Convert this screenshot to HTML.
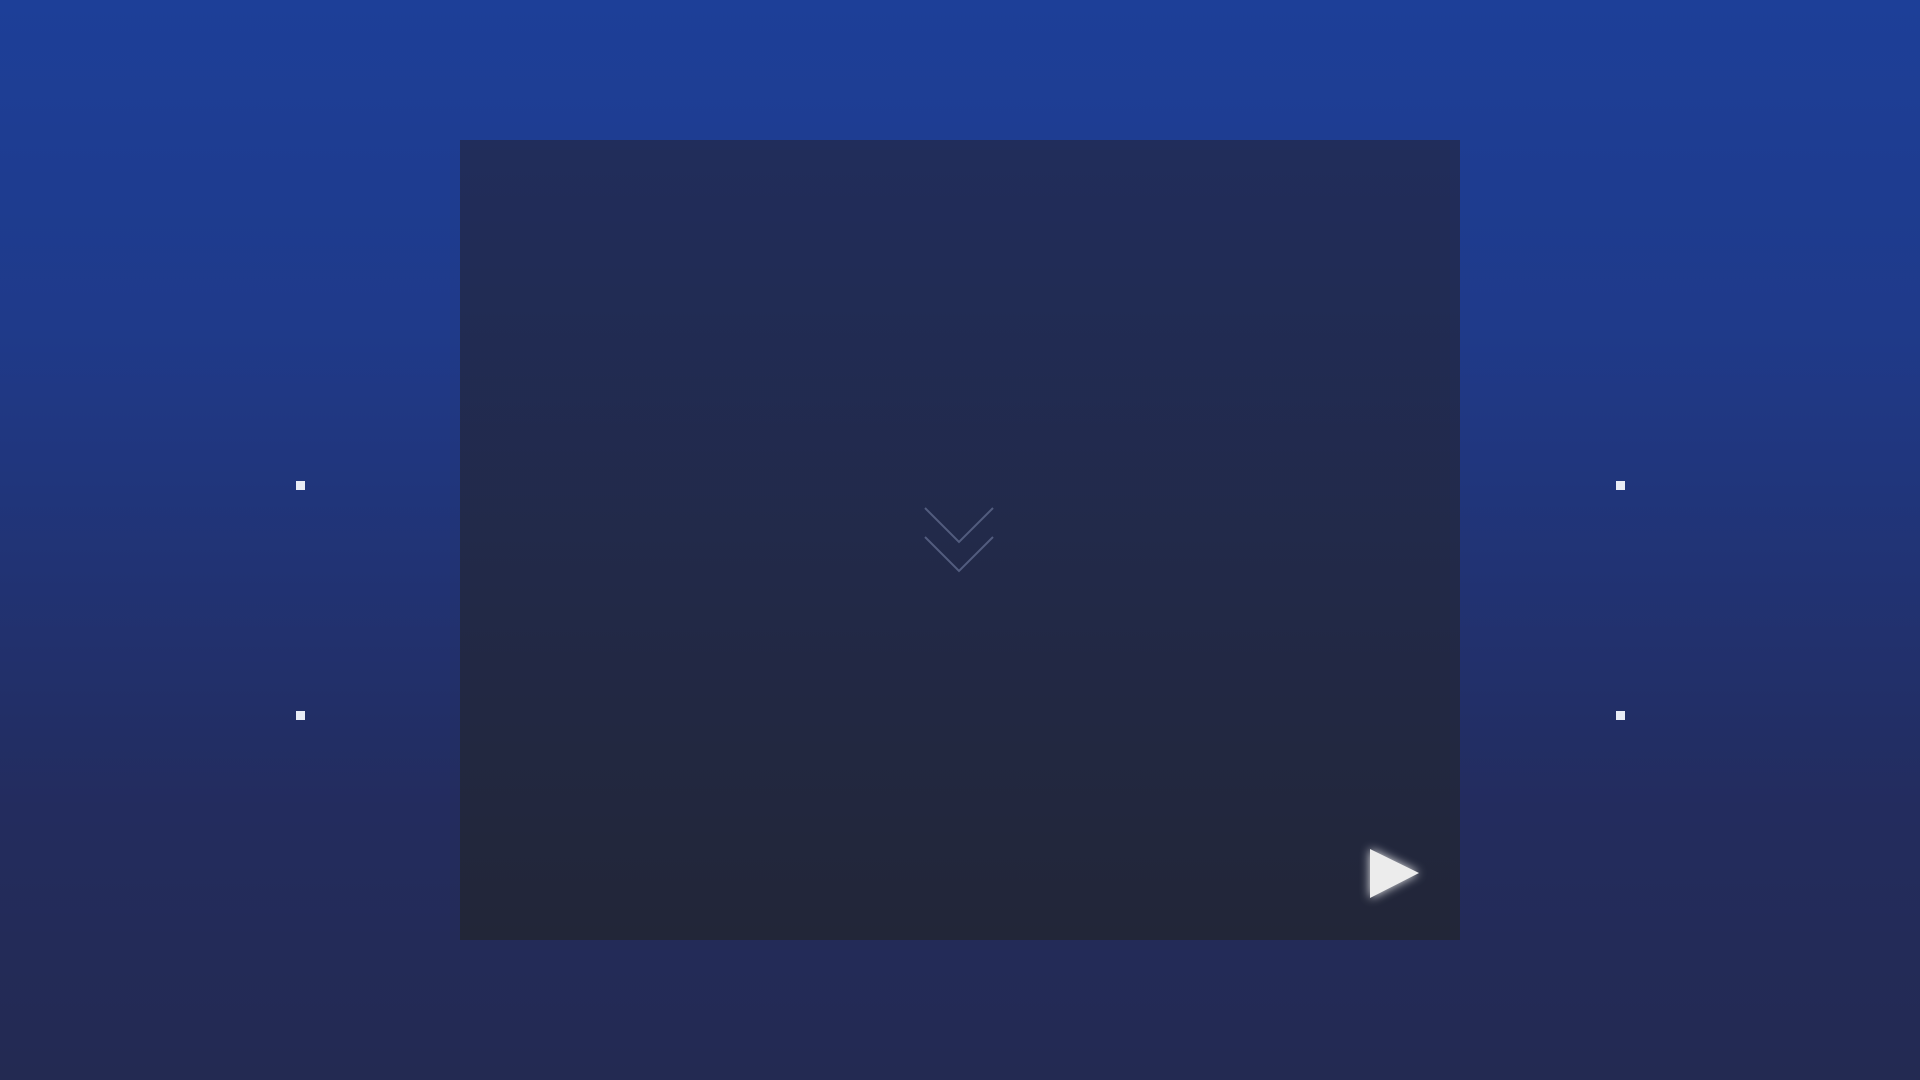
<!DOCTYPE html>
<html><head><style>
html,body{margin:0;width:1920px;height:1080px;overflow:hidden}
body{background:linear-gradient(#1d3f98 0%,#1f3a8a 30%,#232c5e 75%,#232a52 100%);position:relative;font-family:"Liberation Sans",sans-serif}
.panel{position:absolute;left:460px;top:140px;width:1000px;height:800px;background:linear-gradient(#212d5b,#222638)}
.d{position:absolute;width:9px;height:9px;background:#e8ecf5}
</style></head><body>
<div class="panel"></div>
<div class="d" style="left:296px;top:481px"></div>
<div class="d" style="left:296px;top:711px"></div>
<div class="d" style="left:1616px;top:481px"></div>
<div class="d" style="left:1616px;top:711px"></div>
<svg width="1920" height="1080" style="position:absolute;left:0;top:0">
<defs><filter id="g" x="-50%" y="-50%" width="200%" height="200%"><feGaussianBlur stdDeviation="5"/></filter></defs>
<polyline points="925,508 959,542 993,508" fill="none" stroke="#525c7e" stroke-width="2"/>
<polyline points="925,537 959,571 993,537" fill="none" stroke="#525c7e" stroke-width="2"/>
<polygon points="1370,849 1419,873 1370,898" fill="#ffffff" opacity="0.9" filter="url(#g)"/>
<polygon points="1370,849 1419,873 1370,898" fill="#ececec"/>
</svg>
</body></html>
